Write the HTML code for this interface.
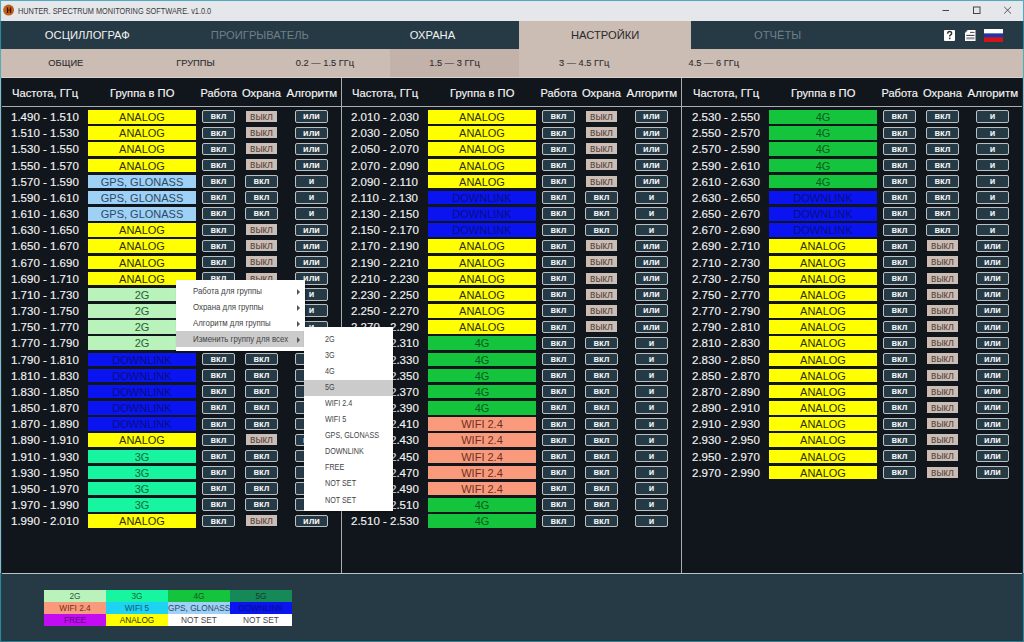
<!DOCTYPE html><html><head><meta charset="utf-8"><title>Hunter</title><style>
*{box-sizing:border-box;margin:0;padding:0}
html,body{width:1024px;height:642px;overflow:hidden;background:#3e8aa1;font-family:"Liberation Sans",sans-serif}
.abs,div{position:absolute}
#title{left:1px;top:1px;width:1021px;height:20px;background:#e5e7eb}
#ticon{left:3px;top:5px;width:11px;height:11px;border-radius:50%;background:#b2521d}
#ticon:after{content:"";position:absolute;left:3px;top:3px;width:5px;height:5px;border-left:1px solid #3a1a08;border-right:1px solid #3a1a08;box-sizing:border-box}
#ttext{left:18px;top:4.5px;font-size:9.2px;color:#3a3a3a;white-space:nowrap;transform:scaleX(0.8);transform-origin:0 0;line-height:12px}
#nav{left:1px;top:21px;width:1021px;height:28px;background:#263a45}
.tab{top:0;height:28px;width:173px;text-align:center;line-height:28px;font-size:11.2px;color:#f2f2f2;white-space:nowrap;-webkit-text-stroke:0}
.tab.dim{color:#6f7f88;-webkit-text-stroke:0}
.tab.sel{background:#cbbcb4;color:#2a2a2a;-webkit-text-stroke:0}
#sub{left:1px;top:49px;width:1021px;height:28px;background:#cbbcb4}
.st{top:0;height:28px;width:129.6px;text-align:center;line-height:29px;font-size:9.3px;color:#2e2e2e;white-space:nowrap;-webkit-text-stroke:0.1px #2e2e2e}
.st span{display:inline-block}
.st.sel{background:#c3b2aa}
#subline{left:1px;top:77px;width:1021px;height:1px;background:#d9d2cd}
#tbl{left:1px;top:78px;width:1021px;height:495px;background:#11161c}
#tline{left:1px;top:573px;width:1021px;height:1px;background:#b9c3c6}
#bot{left:1px;top:574px;width:1021px;height:66px;background:#263a45}
.hl{top:106px;height:1px;background:#a9adb0}
.vl{top:78px;width:1px;height:495px;background:#a9adb0}
.hd{top:86.7px;font-size:11.5px;color:#f6f6f6;line-height:13px;white-space:nowrap;-webkit-text-stroke:0.15px #f6f6f6}
.fr{font-size:11.5px;color:#f2f2f2;line-height:14px;white-space:nowrap;-webkit-text-stroke:0.15px #f2f2f2}
.cell{width:108px;height:13.5px;font-size:11px;line-height:15px;text-align:center;white-space:nowrap}
.b{width:33px;height:12.5px;border:1px solid #b9c1c4;border-radius:2px;background:#263a45;color:#f4f4f4;font-size:9px;font-weight:bold;text-align:center;line-height:10px;white-space:nowrap}
.off{width:31px;height:11px;background:#cbbcb4;color:#54463f;font-size:10px;text-align:center;line-height:11px;white-space:nowrap}
.lg{width:62px;height:12px;font-size:8.3px;line-height:13px;text-align:center;white-space:nowrap}
#menu{left:176px;top:279.5px;width:129px;height:71px;background:#ffffff;box-shadow:1px 1px 2px rgba(0,0,0,.35)}
.mi{left:0;width:129px;height:16px;font-size:9px;line-height:16px;color:#444;padding-left:17px;white-space:nowrap}
.mi span,.si span{position:absolute;left:17px;top:-0.3px;display:inline-block;transform:scaleX(0.873);transform-origin:0 0}
.si span{left:20.5px;top:-0.5px;transform:scaleX(0.8)}
.mi.sel{background:#cbcbcb}
.arr{left:121px;top:5.5px;width:0;height:0;border-left:3.5px solid #555;border-top:3px solid transparent;border-bottom:3px solid transparent}
#smenu{left:304px;top:327px;width:89px;height:183.6px;background:#ffffff;box-shadow:1px 1px 2px rgba(0,0,0,.35)}
.si{left:0;width:89px;height:16px;font-size:9px;line-height:16px;color:#444;white-space:nowrap}
.si.sel{background:#cbcbcb}
</style></head><body>
<div id="title"></div><svg style="position:absolute;left:0;top:0" width="20" height="21"><circle cx="8.6" cy="10.1" r="5.5" fill="#c0601e"/><rect x="6.9" y="7.4" width="1.3" height="5.6" fill="#3b1404"/><rect x="9.9" y="7.4" width="1.3" height="5.6" fill="#3b1404"/><rect x="8" y="9.7" width="2" height="1" fill="#5a2208"/></svg><div id="ttext">HUNTER. SPECTRUM MONITORING SOFTWARE. v1.0.0</div>
<svg style="position:absolute;left:930px;top:0" width="94" height="21">
<line x1="12.5" y1="10.5" x2="19" y2="10.5" stroke="#444" stroke-width="1"/>
<rect x="43.5" y="7" width="6.5" height="6.5" fill="none" stroke="#444" stroke-width="1"/>
<line x1="74.2" y1="6.8" x2="81" y2="13.6" stroke="#444" stroke-width="0.9"/>
<line x1="81" y1="6.8" x2="74.2" y2="13.6" stroke="#444" stroke-width="0.9"/>
</svg>
<div id="nav">
<div class="tab " style="left:0.0px;width:172.6px">ОСЦИЛЛОГРАФ</div>
<div class="tab dim" style="left:172.6px;width:172.6px">ПРОИГРЫВАТЕЛЬ</div>
<div class="tab " style="left:345.2px;width:172.6px">ОХРАНА</div>
<div class="tab sel" style="left:517.8px;width:172.6px">НАСТРОЙКИ</div>
<div class="tab dim" style="left:690.4px;width:172.6px">ОТЧЁТЫ</div>
</div>
<svg style="position:absolute;left:940px;top:26px" width="70" height="20">
<rect x="4" y="4" width="11" height="11" rx="1" fill="#fff"/>
<path d="M7.6 7.6 Q7.8 5.6 9.6 5.6 Q11.6 5.6 11.6 7.5 Q11.6 8.6 10.4 9.2 Q9.7 9.6 9.7 10.6" fill="none" stroke="#333" stroke-width="1.5"/>
<rect x="8.9" y="11.6" width="1.6" height="1.6" fill="#333"/>
<path d="M27.5 4 H35.5 V15 H25 V6.5 Z" fill="#fff"/>
<path d="M25.6 6.6 L27.6 4.6" stroke="#777" stroke-width="0.8"/>
<line x1="30" y1="6.4" x2="34.5" y2="6.4" stroke="#555" stroke-width="1.1"/>
<line x1="26.3" y1="9.4" x2="34.5" y2="9.4" stroke="#444" stroke-width="1.1"/>
<rect x="26.3" y="11.2" width="8.2" height="2.2" fill="#999"/>
<rect x="44" y="3" width="19" height="4.6" fill="#fff"/>
<rect x="44" y="7.6" width="19" height="3.7" fill="#2333b0"/>
<rect x="44" y="11.3" width="19" height="4.7" fill="#d3141a"/>
</svg>
<div id="sub">
<div class="st " style="left:0.0px"><span>ОБЩИЕ</span></div>
<div class="st " style="left:129.6px"><span>ГРУППЫ</span></div>
<div class="st " style="left:259.2px"><span>0.2 — 1.5 ГГц</span></div>
<div class="st sel" style="left:388.8px"><span>1.5 — 3 ГГц</span></div>
<div class="st " style="left:518.4px"><span>3 — 4.5 ГГц</span></div>
<div class="st " style="left:648.0px"><span>4.5 — 6 ГГц</span></div>
</div><div id="subline"></div>
<div id="tbl"></div>
<div class="hl" style="left:2px;width:339px"></div><div class="hl" style="left:342px;width:339px"></div><div class="hl" style="left:682px;width:340px"></div>
<div class="vl" style="left:341px"></div><div class="vl" style="left:681px"></div>
<div class="hd" style="left:12px;font-size:11.2px">Частота, ГГц</div>
<div class="hd" style="left:110px;font-size:11.2px">Группа в ПО</div>
<div class="hd" style="left:200.5px;font-size:11px">Работа</div>
<div class="hd" style="left:242px;font-size:11.2px">Охрана</div>
<div class="hd" style="left:286.5px;font-size:11.5px">Алгоритм</div>
<div class="fr" style="left:11px;top:110.0px">1.490 - 1.510</div>
<div class="cell" style="left:88px;top:110.0px;background:#ffff00;color:#303010">ANALOG</div>
<div class="b" style="left:202px;top:110.3px">вкл</div>
<div class="off" style="left:246px;top:110.8px">выкл</div>
<div class="b" style="left:295px;top:110.3px">или</div>
<div class="fr" style="left:11px;top:126.2px">1.510 - 1.530</div>
<div class="cell" style="left:88px;top:126.2px;background:#ffff00;color:#303010">ANALOG</div>
<div class="b" style="left:202px;top:126.5px">вкл</div>
<div class="off" style="left:246px;top:127.0px">выкл</div>
<div class="b" style="left:295px;top:126.5px">или</div>
<div class="fr" style="left:11px;top:142.3px">1.530 - 1.550</div>
<div class="cell" style="left:88px;top:142.3px;background:#ffff00;color:#303010">ANALOG</div>
<div class="b" style="left:202px;top:142.6px">вкл</div>
<div class="off" style="left:246px;top:143.1px">выкл</div>
<div class="b" style="left:295px;top:142.6px">или</div>
<div class="fr" style="left:11px;top:158.5px">1.550 - 1.570</div>
<div class="cell" style="left:88px;top:158.5px;background:#ffff00;color:#303010">ANALOG</div>
<div class="b" style="left:202px;top:158.8px">вкл</div>
<div class="off" style="left:246px;top:159.3px">выкл</div>
<div class="b" style="left:295px;top:158.8px">или</div>
<div class="fr" style="left:11px;top:174.7px">1.570 - 1.590</div>
<div class="cell" style="left:88px;top:174.7px;background:#9fd0f5;color:#2a4a66">GPS, GLONASS</div>
<div class="b" style="left:202px;top:175.0px">вкл</div>
<div class="b" style="left:245px;top:175.0px">вкл</div>
<div class="b" style="left:295px;top:175.0px">и</div>
<div class="fr" style="left:11px;top:190.9px">1.590 - 1.610</div>
<div class="cell" style="left:88px;top:190.9px;background:#9fd0f5;color:#2a4a66">GPS, GLONASS</div>
<div class="b" style="left:202px;top:191.2px">вкл</div>
<div class="b" style="left:245px;top:191.2px">вкл</div>
<div class="b" style="left:295px;top:191.2px">и</div>
<div class="fr" style="left:11px;top:207.0px">1.610 - 1.630</div>
<div class="cell" style="left:88px;top:207.0px;background:#9fd0f5;color:#2a4a66">GPS, GLONASS</div>
<div class="b" style="left:202px;top:207.3px">вкл</div>
<div class="b" style="left:245px;top:207.3px">вкл</div>
<div class="b" style="left:295px;top:207.3px">и</div>
<div class="fr" style="left:11px;top:223.2px">1.630 - 1.650</div>
<div class="cell" style="left:88px;top:223.2px;background:#ffff00;color:#303010">ANALOG</div>
<div class="b" style="left:202px;top:223.5px">вкл</div>
<div class="off" style="left:246px;top:224.0px">выкл</div>
<div class="b" style="left:295px;top:223.5px">или</div>
<div class="fr" style="left:11px;top:239.4px">1.650 - 1.670</div>
<div class="cell" style="left:88px;top:239.4px;background:#ffff00;color:#303010">ANALOG</div>
<div class="b" style="left:202px;top:239.7px">вкл</div>
<div class="off" style="left:246px;top:240.2px">выкл</div>
<div class="b" style="left:295px;top:239.7px">или</div>
<div class="fr" style="left:11px;top:255.5px">1.670 - 1.690</div>
<div class="cell" style="left:88px;top:255.5px;background:#ffff00;color:#303010">ANALOG</div>
<div class="b" style="left:202px;top:255.8px">вкл</div>
<div class="off" style="left:246px;top:256.3px">выкл</div>
<div class="b" style="left:295px;top:255.8px">или</div>
<div class="fr" style="left:11px;top:271.7px">1.690 - 1.710</div>
<div class="cell" style="left:88px;top:271.7px;background:#ffff00;color:#303010">ANALOG</div>
<div class="b" style="left:202px;top:272.0px">вкл</div>
<div class="off" style="left:246px;top:272.5px">выкл</div>
<div class="b" style="left:295px;top:272.0px">или</div>
<div class="fr" style="left:11px;top:287.9px">1.710 - 1.730</div>
<div class="cell" style="left:88px;top:287.9px;background:#b9f3bb;color:#2e5a35">2G</div>
<div class="b" style="left:202px;top:288.2px">вкл</div>
<div class="b" style="left:245px;top:288.2px">вкл</div>
<div class="b" style="left:295px;top:288.2px">и</div>
<div class="fr" style="left:11px;top:304.0px">1.730 - 1.750</div>
<div class="cell" style="left:88px;top:304.0px;background:#b9f3bb;color:#2e5a35">2G</div>
<div class="b" style="left:202px;top:304.3px">вкл</div>
<div class="b" style="left:245px;top:304.3px">вкл</div>
<div class="b" style="left:295px;top:304.3px">и</div>
<div class="fr" style="left:11px;top:320.2px">1.750 - 1.770</div>
<div class="cell" style="left:88px;top:320.2px;background:#b9f3bb;color:#2e5a35">2G</div>
<div class="b" style="left:202px;top:320.5px">вкл</div>
<div class="b" style="left:245px;top:320.5px">вкл</div>
<div class="b" style="left:295px;top:320.5px">и</div>
<div class="fr" style="left:11px;top:336.4px">1.770 - 1.790</div>
<div class="cell" style="left:88px;top:336.4px;background:#b9f3bb;color:#2e5a35">2G</div>
<div class="b" style="left:202px;top:336.7px">вкл</div>
<div class="b" style="left:245px;top:336.7px">вкл</div>
<div class="b" style="left:295px;top:336.7px">и</div>
<div class="fr" style="left:11px;top:352.6px">1.790 - 1.810</div>
<div class="cell" style="left:88px;top:352.6px;background:#0a14f0;color:#06107a">DOWNLINK</div>
<div class="b" style="left:202px;top:352.9px">вкл</div>
<div class="b" style="left:245px;top:352.9px">вкл</div>
<div class="b" style="left:295px;top:352.9px">и</div>
<div class="fr" style="left:11px;top:368.7px">1.810 - 1.830</div>
<div class="cell" style="left:88px;top:368.7px;background:#0a14f0;color:#06107a">DOWNLINK</div>
<div class="b" style="left:202px;top:369.0px">вкл</div>
<div class="b" style="left:245px;top:369.0px">вкл</div>
<div class="b" style="left:295px;top:369.0px">и</div>
<div class="fr" style="left:11px;top:384.9px">1.830 - 1.850</div>
<div class="cell" style="left:88px;top:384.9px;background:#0a14f0;color:#06107a">DOWNLINK</div>
<div class="b" style="left:202px;top:385.2px">вкл</div>
<div class="b" style="left:245px;top:385.2px">вкл</div>
<div class="b" style="left:295px;top:385.2px">и</div>
<div class="fr" style="left:11px;top:401.1px">1.850 - 1.870</div>
<div class="cell" style="left:88px;top:401.1px;background:#0a14f0;color:#06107a">DOWNLINK</div>
<div class="b" style="left:202px;top:401.4px">вкл</div>
<div class="b" style="left:245px;top:401.4px">вкл</div>
<div class="b" style="left:295px;top:401.4px">и</div>
<div class="fr" style="left:11px;top:417.2px">1.870 - 1.890</div>
<div class="cell" style="left:88px;top:417.2px;background:#0a14f0;color:#06107a">DOWNLINK</div>
<div class="b" style="left:202px;top:417.5px">вкл</div>
<div class="b" style="left:245px;top:417.5px">вкл</div>
<div class="b" style="left:295px;top:417.5px">и</div>
<div class="fr" style="left:11px;top:433.4px">1.890 - 1.910</div>
<div class="cell" style="left:88px;top:433.4px;background:#ffff00;color:#303010">ANALOG</div>
<div class="b" style="left:202px;top:433.7px">вкл</div>
<div class="off" style="left:246px;top:434.2px">выкл</div>
<div class="b" style="left:295px;top:433.7px">или</div>
<div class="fr" style="left:11px;top:449.6px">1.910 - 1.930</div>
<div class="cell" style="left:88px;top:449.6px;background:#18f5a0;color:#146636">3G</div>
<div class="b" style="left:202px;top:449.9px">вкл</div>
<div class="b" style="left:245px;top:449.9px">вкл</div>
<div class="b" style="left:295px;top:449.9px">и</div>
<div class="fr" style="left:11px;top:465.7px">1.930 - 1.950</div>
<div class="cell" style="left:88px;top:465.7px;background:#18f5a0;color:#146636">3G</div>
<div class="b" style="left:202px;top:466.0px">вкл</div>
<div class="b" style="left:245px;top:466.0px">вкл</div>
<div class="b" style="left:295px;top:466.0px">и</div>
<div class="fr" style="left:11px;top:481.9px">1.950 - 1.970</div>
<div class="cell" style="left:88px;top:481.9px;background:#18f5a0;color:#146636">3G</div>
<div class="b" style="left:202px;top:482.2px">вкл</div>
<div class="b" style="left:245px;top:482.2px">вкл</div>
<div class="b" style="left:295px;top:482.2px">и</div>
<div class="fr" style="left:11px;top:498.1px">1.970 - 1.990</div>
<div class="cell" style="left:88px;top:498.1px;background:#18f5a0;color:#146636">3G</div>
<div class="b" style="left:202px;top:498.4px">вкл</div>
<div class="b" style="left:245px;top:498.4px">вкл</div>
<div class="b" style="left:295px;top:498.4px">и</div>
<div class="fr" style="left:11px;top:514.2px">1.990 - 2.010</div>
<div class="cell" style="left:88px;top:514.2px;background:#ffff00;color:#303010">ANALOG</div>
<div class="b" style="left:202px;top:514.5px">вкл</div>
<div class="off" style="left:246px;top:515.0px">выкл</div>
<div class="b" style="left:295px;top:514.5px">или</div>
<div class="hd" style="left:352px;font-size:11.2px">Частота, ГГц</div>
<div class="hd" style="left:450px;font-size:11.2px">Группа в ПО</div>
<div class="hd" style="left:540.5px;font-size:11px">Работа</div>
<div class="hd" style="left:582px;font-size:11.2px">Охрана</div>
<div class="hd" style="left:626.5px;font-size:11.5px">Алгоритм</div>
<div class="fr" style="left:351px;top:110.0px">2.010 - 2.030</div>
<div class="cell" style="left:428px;top:110.0px;background:#ffff00;color:#303010">ANALOG</div>
<div class="b" style="left:542px;top:110.3px">вкл</div>
<div class="off" style="left:586px;top:110.8px">выкл</div>
<div class="b" style="left:635px;top:110.3px">или</div>
<div class="fr" style="left:351px;top:126.2px">2.030 - 2.050</div>
<div class="cell" style="left:428px;top:126.2px;background:#ffff00;color:#303010">ANALOG</div>
<div class="b" style="left:542px;top:126.5px">вкл</div>
<div class="off" style="left:586px;top:127.0px">выкл</div>
<div class="b" style="left:635px;top:126.5px">или</div>
<div class="fr" style="left:351px;top:142.3px">2.050 - 2.070</div>
<div class="cell" style="left:428px;top:142.3px;background:#ffff00;color:#303010">ANALOG</div>
<div class="b" style="left:542px;top:142.6px">вкл</div>
<div class="off" style="left:586px;top:143.1px">выкл</div>
<div class="b" style="left:635px;top:142.6px">или</div>
<div class="fr" style="left:351px;top:158.5px">2.070 - 2.090</div>
<div class="cell" style="left:428px;top:158.5px;background:#ffff00;color:#303010">ANALOG</div>
<div class="b" style="left:542px;top:158.8px">вкл</div>
<div class="off" style="left:586px;top:159.3px">выкл</div>
<div class="b" style="left:635px;top:158.8px">или</div>
<div class="fr" style="left:351px;top:174.7px">2.090 - 2.110</div>
<div class="cell" style="left:428px;top:174.7px;background:#ffff00;color:#303010">ANALOG</div>
<div class="b" style="left:542px;top:175.0px">вкл</div>
<div class="off" style="left:586px;top:175.5px">выкл</div>
<div class="b" style="left:635px;top:175.0px">или</div>
<div class="fr" style="left:351px;top:190.9px">2.110 - 2.130</div>
<div class="cell" style="left:428px;top:190.9px;background:#0a14f0;color:#06107a">DOWNLINK</div>
<div class="b" style="left:542px;top:191.2px">вкл</div>
<div class="b" style="left:585px;top:191.2px">вкл</div>
<div class="b" style="left:635px;top:191.2px">и</div>
<div class="fr" style="left:351px;top:207.0px">2.130 - 2.150</div>
<div class="cell" style="left:428px;top:207.0px;background:#0a14f0;color:#06107a">DOWNLINK</div>
<div class="b" style="left:542px;top:207.3px">вкл</div>
<div class="b" style="left:585px;top:207.3px">вкл</div>
<div class="b" style="left:635px;top:207.3px">и</div>
<div class="fr" style="left:351px;top:223.2px">2.150 - 2.170</div>
<div class="cell" style="left:428px;top:223.2px;background:#0a14f0;color:#06107a">DOWNLINK</div>
<div class="b" style="left:542px;top:223.5px">вкл</div>
<div class="b" style="left:585px;top:223.5px">вкл</div>
<div class="b" style="left:635px;top:223.5px">и</div>
<div class="fr" style="left:351px;top:239.4px">2.170 - 2.190</div>
<div class="cell" style="left:428px;top:239.4px;background:#ffff00;color:#303010">ANALOG</div>
<div class="b" style="left:542px;top:239.7px">вкл</div>
<div class="off" style="left:586px;top:240.2px">выкл</div>
<div class="b" style="left:635px;top:239.7px">или</div>
<div class="fr" style="left:351px;top:255.5px">2.190 - 2.210</div>
<div class="cell" style="left:428px;top:255.5px;background:#ffff00;color:#303010">ANALOG</div>
<div class="b" style="left:542px;top:255.8px">вкл</div>
<div class="off" style="left:586px;top:256.3px">выкл</div>
<div class="b" style="left:635px;top:255.8px">или</div>
<div class="fr" style="left:351px;top:271.7px">2.210 - 2.230</div>
<div class="cell" style="left:428px;top:271.7px;background:#ffff00;color:#303010">ANALOG</div>
<div class="b" style="left:542px;top:272.0px">вкл</div>
<div class="off" style="left:586px;top:272.5px">выкл</div>
<div class="b" style="left:635px;top:272.0px">или</div>
<div class="fr" style="left:351px;top:287.9px">2.230 - 2.250</div>
<div class="cell" style="left:428px;top:287.9px;background:#ffff00;color:#303010">ANALOG</div>
<div class="b" style="left:542px;top:288.2px">вкл</div>
<div class="off" style="left:586px;top:288.7px">выкл</div>
<div class="b" style="left:635px;top:288.2px">или</div>
<div class="fr" style="left:351px;top:304.0px">2.250 - 2.270</div>
<div class="cell" style="left:428px;top:304.0px;background:#ffff00;color:#303010">ANALOG</div>
<div class="b" style="left:542px;top:304.3px">вкл</div>
<div class="off" style="left:586px;top:304.8px">выкл</div>
<div class="b" style="left:635px;top:304.3px">или</div>
<div class="fr" style="left:351px;top:320.2px">2.270 - 2.290</div>
<div class="cell" style="left:428px;top:320.2px;background:#ffff00;color:#303010">ANALOG</div>
<div class="b" style="left:542px;top:320.5px">вкл</div>
<div class="off" style="left:586px;top:321.0px">выкл</div>
<div class="b" style="left:635px;top:320.5px">или</div>
<div class="fr" style="left:351px;top:336.4px">2.290 - 2.310</div>
<div class="cell" style="left:428px;top:336.4px;background:#14c43c;color:#0e5a22">4G</div>
<div class="b" style="left:542px;top:336.7px">вкл</div>
<div class="b" style="left:585px;top:336.7px">вкл</div>
<div class="b" style="left:635px;top:336.7px">и</div>
<div class="fr" style="left:351px;top:352.6px">2.310 - 2.330</div>
<div class="cell" style="left:428px;top:352.6px;background:#14c43c;color:#0e5a22">4G</div>
<div class="b" style="left:542px;top:352.9px">вкл</div>
<div class="b" style="left:585px;top:352.9px">вкл</div>
<div class="b" style="left:635px;top:352.9px">и</div>
<div class="fr" style="left:351px;top:368.7px">2.330 - 2.350</div>
<div class="cell" style="left:428px;top:368.7px;background:#14c43c;color:#0e5a22">4G</div>
<div class="b" style="left:542px;top:369.0px">вкл</div>
<div class="b" style="left:585px;top:369.0px">вкл</div>
<div class="b" style="left:635px;top:369.0px">и</div>
<div class="fr" style="left:351px;top:384.9px">2.350 - 2.370</div>
<div class="cell" style="left:428px;top:384.9px;background:#14c43c;color:#0e5a22">4G</div>
<div class="b" style="left:542px;top:385.2px">вкл</div>
<div class="b" style="left:585px;top:385.2px">вкл</div>
<div class="b" style="left:635px;top:385.2px">и</div>
<div class="fr" style="left:351px;top:401.1px">2.370 - 2.390</div>
<div class="cell" style="left:428px;top:401.1px;background:#14c43c;color:#0e5a22">4G</div>
<div class="b" style="left:542px;top:401.4px">вкл</div>
<div class="b" style="left:585px;top:401.4px">вкл</div>
<div class="b" style="left:635px;top:401.4px">и</div>
<div class="fr" style="left:351px;top:417.2px">2.390 - 2.410</div>
<div class="cell" style="left:428px;top:417.2px;background:#fa9a7c;color:#6a3222">WIFI 2.4</div>
<div class="b" style="left:542px;top:417.5px">вкл</div>
<div class="b" style="left:585px;top:417.5px">вкл</div>
<div class="b" style="left:635px;top:417.5px">и</div>
<div class="fr" style="left:351px;top:433.4px">2.410 - 2.430</div>
<div class="cell" style="left:428px;top:433.4px;background:#fa9a7c;color:#6a3222">WIFI 2.4</div>
<div class="b" style="left:542px;top:433.7px">вкл</div>
<div class="b" style="left:585px;top:433.7px">вкл</div>
<div class="b" style="left:635px;top:433.7px">и</div>
<div class="fr" style="left:351px;top:449.6px">2.430 - 2.450</div>
<div class="cell" style="left:428px;top:449.6px;background:#fa9a7c;color:#6a3222">WIFI 2.4</div>
<div class="b" style="left:542px;top:449.9px">вкл</div>
<div class="b" style="left:585px;top:449.9px">вкл</div>
<div class="b" style="left:635px;top:449.9px">и</div>
<div class="fr" style="left:351px;top:465.7px">2.450 - 2.470</div>
<div class="cell" style="left:428px;top:465.7px;background:#fa9a7c;color:#6a3222">WIFI 2.4</div>
<div class="b" style="left:542px;top:466.0px">вкл</div>
<div class="b" style="left:585px;top:466.0px">вкл</div>
<div class="b" style="left:635px;top:466.0px">и</div>
<div class="fr" style="left:351px;top:481.9px">2.470 - 2.490</div>
<div class="cell" style="left:428px;top:481.9px;background:#fa9a7c;color:#6a3222">WIFI 2.4</div>
<div class="b" style="left:542px;top:482.2px">вкл</div>
<div class="b" style="left:585px;top:482.2px">вкл</div>
<div class="b" style="left:635px;top:482.2px">и</div>
<div class="fr" style="left:351px;top:498.1px">2.490 - 2.510</div>
<div class="cell" style="left:428px;top:498.1px;background:#14c43c;color:#0e5a22">4G</div>
<div class="b" style="left:542px;top:498.4px">вкл</div>
<div class="b" style="left:585px;top:498.4px">вкл</div>
<div class="b" style="left:635px;top:498.4px">и</div>
<div class="fr" style="left:351px;top:514.2px">2.510 - 2.530</div>
<div class="cell" style="left:428px;top:514.2px;background:#14c43c;color:#0e5a22">4G</div>
<div class="b" style="left:542px;top:514.5px">вкл</div>
<div class="b" style="left:585px;top:514.5px">вкл</div>
<div class="b" style="left:635px;top:514.5px">и</div>
<div class="hd" style="left:693px;font-size:11.2px">Частота, ГГц</div>
<div class="hd" style="left:791px;font-size:11.2px">Группа в ПО</div>
<div class="hd" style="left:881.5px;font-size:11px">Работа</div>
<div class="hd" style="left:923px;font-size:11.2px">Охрана</div>
<div class="hd" style="left:967.5px;font-size:11.5px">Алгоритм</div>
<div class="fr" style="left:692px;top:110.0px">2.530 - 2.550</div>
<div class="cell" style="left:769px;top:110.0px;background:#14c43c;color:#0e5a22">4G</div>
<div class="b" style="left:883px;top:110.3px">вкл</div>
<div class="b" style="left:926px;top:110.3px">вкл</div>
<div class="b" style="left:976px;top:110.3px">и</div>
<div class="fr" style="left:692px;top:126.2px">2.550 - 2.570</div>
<div class="cell" style="left:769px;top:126.2px;background:#14c43c;color:#0e5a22">4G</div>
<div class="b" style="left:883px;top:126.5px">вкл</div>
<div class="b" style="left:926px;top:126.5px">вкл</div>
<div class="b" style="left:976px;top:126.5px">и</div>
<div class="fr" style="left:692px;top:142.3px">2.570 - 2.590</div>
<div class="cell" style="left:769px;top:142.3px;background:#14c43c;color:#0e5a22">4G</div>
<div class="b" style="left:883px;top:142.6px">вкл</div>
<div class="b" style="left:926px;top:142.6px">вкл</div>
<div class="b" style="left:976px;top:142.6px">и</div>
<div class="fr" style="left:692px;top:158.5px">2.590 - 2.610</div>
<div class="cell" style="left:769px;top:158.5px;background:#14c43c;color:#0e5a22">4G</div>
<div class="b" style="left:883px;top:158.8px">вкл</div>
<div class="b" style="left:926px;top:158.8px">вкл</div>
<div class="b" style="left:976px;top:158.8px">и</div>
<div class="fr" style="left:692px;top:174.7px">2.610 - 2.630</div>
<div class="cell" style="left:769px;top:174.7px;background:#14c43c;color:#0e5a22">4G</div>
<div class="b" style="left:883px;top:175.0px">вкл</div>
<div class="b" style="left:926px;top:175.0px">вкл</div>
<div class="b" style="left:976px;top:175.0px">и</div>
<div class="fr" style="left:692px;top:190.9px">2.630 - 2.650</div>
<div class="cell" style="left:769px;top:190.9px;background:#0a14f0;color:#06107a">DOWNLINK</div>
<div class="b" style="left:883px;top:191.2px">вкл</div>
<div class="b" style="left:926px;top:191.2px">вкл</div>
<div class="b" style="left:976px;top:191.2px">и</div>
<div class="fr" style="left:692px;top:207.0px">2.650 - 2.670</div>
<div class="cell" style="left:769px;top:207.0px;background:#0a14f0;color:#06107a">DOWNLINK</div>
<div class="b" style="left:883px;top:207.3px">вкл</div>
<div class="b" style="left:926px;top:207.3px">вкл</div>
<div class="b" style="left:976px;top:207.3px">и</div>
<div class="fr" style="left:692px;top:223.2px">2.670 - 2.690</div>
<div class="cell" style="left:769px;top:223.2px;background:#0a14f0;color:#06107a">DOWNLINK</div>
<div class="b" style="left:883px;top:223.5px">вкл</div>
<div class="b" style="left:926px;top:223.5px">вкл</div>
<div class="b" style="left:976px;top:223.5px">и</div>
<div class="fr" style="left:692px;top:239.4px">2.690 - 2.710</div>
<div class="cell" style="left:769px;top:239.4px;background:#ffff00;color:#303010">ANALOG</div>
<div class="b" style="left:883px;top:239.7px">вкл</div>
<div class="off" style="left:927px;top:240.2px">выкл</div>
<div class="b" style="left:976px;top:239.7px">или</div>
<div class="fr" style="left:692px;top:255.5px">2.710 - 2.730</div>
<div class="cell" style="left:769px;top:255.5px;background:#ffff00;color:#303010">ANALOG</div>
<div class="b" style="left:883px;top:255.8px">вкл</div>
<div class="off" style="left:927px;top:256.3px">выкл</div>
<div class="b" style="left:976px;top:255.8px">или</div>
<div class="fr" style="left:692px;top:271.7px">2.730 - 2.750</div>
<div class="cell" style="left:769px;top:271.7px;background:#ffff00;color:#303010">ANALOG</div>
<div class="b" style="left:883px;top:272.0px">вкл</div>
<div class="off" style="left:927px;top:272.5px">выкл</div>
<div class="b" style="left:976px;top:272.0px">или</div>
<div class="fr" style="left:692px;top:287.9px">2.750 - 2.770</div>
<div class="cell" style="left:769px;top:287.9px;background:#ffff00;color:#303010">ANALOG</div>
<div class="b" style="left:883px;top:288.2px">вкл</div>
<div class="off" style="left:927px;top:288.7px">выкл</div>
<div class="b" style="left:976px;top:288.2px">или</div>
<div class="fr" style="left:692px;top:304.0px">2.770 - 2.790</div>
<div class="cell" style="left:769px;top:304.0px;background:#ffff00;color:#303010">ANALOG</div>
<div class="b" style="left:883px;top:304.3px">вкл</div>
<div class="off" style="left:927px;top:304.8px">выкл</div>
<div class="b" style="left:976px;top:304.3px">или</div>
<div class="fr" style="left:692px;top:320.2px">2.790 - 2.810</div>
<div class="cell" style="left:769px;top:320.2px;background:#ffff00;color:#303010">ANALOG</div>
<div class="b" style="left:883px;top:320.5px">вкл</div>
<div class="off" style="left:927px;top:321.0px">выкл</div>
<div class="b" style="left:976px;top:320.5px">или</div>
<div class="fr" style="left:692px;top:336.4px">2.810 - 2.830</div>
<div class="cell" style="left:769px;top:336.4px;background:#ffff00;color:#303010">ANALOG</div>
<div class="b" style="left:883px;top:336.7px">вкл</div>
<div class="off" style="left:927px;top:337.2px">выкл</div>
<div class="b" style="left:976px;top:336.7px">или</div>
<div class="fr" style="left:692px;top:352.6px">2.830 - 2.850</div>
<div class="cell" style="left:769px;top:352.6px;background:#ffff00;color:#303010">ANALOG</div>
<div class="b" style="left:883px;top:352.9px">вкл</div>
<div class="off" style="left:927px;top:353.4px">выкл</div>
<div class="b" style="left:976px;top:352.9px">или</div>
<div class="fr" style="left:692px;top:368.7px">2.850 - 2.870</div>
<div class="cell" style="left:769px;top:368.7px;background:#ffff00;color:#303010">ANALOG</div>
<div class="b" style="left:883px;top:369.0px">вкл</div>
<div class="off" style="left:927px;top:369.5px">выкл</div>
<div class="b" style="left:976px;top:369.0px">или</div>
<div class="fr" style="left:692px;top:384.9px">2.870 - 2.890</div>
<div class="cell" style="left:769px;top:384.9px;background:#ffff00;color:#303010">ANALOG</div>
<div class="b" style="left:883px;top:385.2px">вкл</div>
<div class="off" style="left:927px;top:385.7px">выкл</div>
<div class="b" style="left:976px;top:385.2px">или</div>
<div class="fr" style="left:692px;top:401.1px">2.890 - 2.910</div>
<div class="cell" style="left:769px;top:401.1px;background:#ffff00;color:#303010">ANALOG</div>
<div class="b" style="left:883px;top:401.4px">вкл</div>
<div class="off" style="left:927px;top:401.9px">выкл</div>
<div class="b" style="left:976px;top:401.4px">или</div>
<div class="fr" style="left:692px;top:417.2px">2.910 - 2.930</div>
<div class="cell" style="left:769px;top:417.2px;background:#ffff00;color:#303010">ANALOG</div>
<div class="b" style="left:883px;top:417.5px">вкл</div>
<div class="off" style="left:927px;top:418.0px">выкл</div>
<div class="b" style="left:976px;top:417.5px">или</div>
<div class="fr" style="left:692px;top:433.4px">2.930 - 2.950</div>
<div class="cell" style="left:769px;top:433.4px;background:#ffff00;color:#303010">ANALOG</div>
<div class="b" style="left:883px;top:433.7px">вкл</div>
<div class="off" style="left:927px;top:434.2px">выкл</div>
<div class="b" style="left:976px;top:433.7px">или</div>
<div class="fr" style="left:692px;top:449.6px">2.950 - 2.970</div>
<div class="cell" style="left:769px;top:449.6px;background:#ffff00;color:#303010">ANALOG</div>
<div class="b" style="left:883px;top:449.9px">вкл</div>
<div class="off" style="left:927px;top:450.4px">выкл</div>
<div class="b" style="left:976px;top:449.9px">или</div>
<div class="fr" style="left:692px;top:465.7px">2.970 - 2.990</div>
<div class="cell" style="left:769px;top:465.7px;background:#ffff00;color:#303010">ANALOG</div>
<div class="b" style="left:883px;top:466.0px">вкл</div>
<div class="off" style="left:927px;top:466.5px">выкл</div>
<div class="b" style="left:976px;top:466.0px">или</div>
<div id="tline"></div><div id="bot"></div>
<div class="lg" style="left:44px;top:590px;background:#b9f3bb;color:#2e5a35">2G</div>
<div class="lg" style="left:106px;top:590px;background:#18f5a0;color:#146636">3G</div>
<div class="lg" style="left:168px;top:590px;background:#14c43c;color:#0e5a22">4G</div>
<div class="lg" style="left:230px;top:590px;background:#158a58;color:#0b3f28">5G</div>
<div class="lg" style="left:44px;top:602px;background:#fa9a7c;color:#6a3222">WIFI 2.4</div>
<div class="lg" style="left:106px;top:602px;background:#1ed2f2;color:#0e5a6a">WIFI 5</div>
<div class="lg" style="left:168px;top:602px;background:#9fd0f5;color:#2a4a66">GPS, GLONASS</div>
<div class="lg" style="left:230px;top:602px;background:#0a14f0;color:#06107a">DOWNLINK</div>
<div class="lg" style="left:44px;top:614px;background:#c40cf2;color:#5a0a78">FREE</div>
<div class="lg" style="left:106px;top:614px;background:#ffff00;color:#303010">ANALOG</div>
<div class="lg" style="left:168px;top:614px;background:#ffffff;color:#444444">NOT SET</div>
<div class="lg" style="left:230px;top:614px;background:#ffffff;color:#444444">NOT SET</div>
<div id="menu">
<div class="mi " style="top:3.5px"><span>Работа для группы</span><div class="arr"></div></div>
<div class="mi " style="top:19.6px"><span>Охрана для группы</span><div class="arr"></div></div>
<div class="mi " style="top:35.7px"><span>Алгоритм для группы</span><div class="arr"></div></div>
<div class="mi sel" style="top:51.8px"><span>Изменить группу для всех</span><div class="arr"></div></div>
</div>
<div id="smenu">
<div class="si " style="top:4.3px"><span>2G</span></div>
<div class="si " style="top:20.4px"><span>3G</span></div>
<div class="si " style="top:36.4px"><span>4G</span></div>
<div class="si sel" style="top:52.5px"><span>5G</span></div>
<div class="si " style="top:68.6px"><span>WIFI 2.4</span></div>
<div class="si " style="top:84.6px"><span>WIFI 5</span></div>
<div class="si " style="top:100.7px"><span>GPS, GLONASS</span></div>
<div class="si " style="top:116.8px"><span>DOWNLINK</span></div>
<div class="si " style="top:132.9px"><span>FREE</span></div>
<div class="si " style="top:148.9px"><span>NOT SET</span></div>
<div class="si " style="top:165.0px"><span>NOT SET</span></div>
</div>
<div style="left:0;top:0px;width:1px;height:21px;background:#6aa0b0"></div>
<div style="left:1023px;top:0px;width:1px;height:21px;background:#6aa0b0"></div>
<div style="left:1px;top:0px;width:1px;height:21px;background:#c8eef6"></div>
<div style="left:1022px;top:0px;width:1px;height:21px;background:#c8eef6"></div>
<div style="left:0;top:21px;width:1px;height:28px;background:#3f7f90"></div>
<div style="left:1023px;top:21px;width:1px;height:28px;background:#3f7f90"></div>
<div style="left:1px;top:21px;width:1px;height:28px;background:#12485a"></div>
<div style="left:1022px;top:21px;width:1px;height:28px;background:#12485a"></div>
<div style="left:0;top:49px;width:1px;height:29px;background:#72a2a4"></div>
<div style="left:1023px;top:49px;width:1px;height:29px;background:#72a2a4"></div>
<div style="left:1px;top:49px;width:1px;height:29px;background:#a9c5c6"></div>
<div style="left:1022px;top:49px;width:1px;height:29px;background:#a9c5c6"></div>
<div style="left:0;top:78px;width:1px;height:495px;background:#8db7c5"></div>
<div style="left:1023px;top:78px;width:1px;height:495px;background:#8db7c5"></div>
<div style="left:1px;top:78px;width:1px;height:495px;background:#123038"></div>
<div style="left:1022px;top:78px;width:1px;height:495px;background:#123038"></div>
<div style="left:0;top:573px;width:1px;height:69px;background:#3f7f90"></div>
<div style="left:1023px;top:573px;width:1px;height:69px;background:#3f7f90"></div>
<div style="left:1px;top:573px;width:1px;height:69px;background:#12485a"></div>
<div style="left:1022px;top:573px;width:1px;height:69px;background:#12485a"></div>
<div style="left:0;top:0;width:1024px;height:1px;background:#6aa0b0"></div>
<div style="left:1px;top:1px;width:1022px;height:1px;background:#c8eef6"></div>
<div style="left:1px;top:640px;width:1022px;height:1px;background:#10404c"></div>
<div style="left:0;top:641px;width:1024px;height:1px;background:#3a7888"></div>
</body></html>
